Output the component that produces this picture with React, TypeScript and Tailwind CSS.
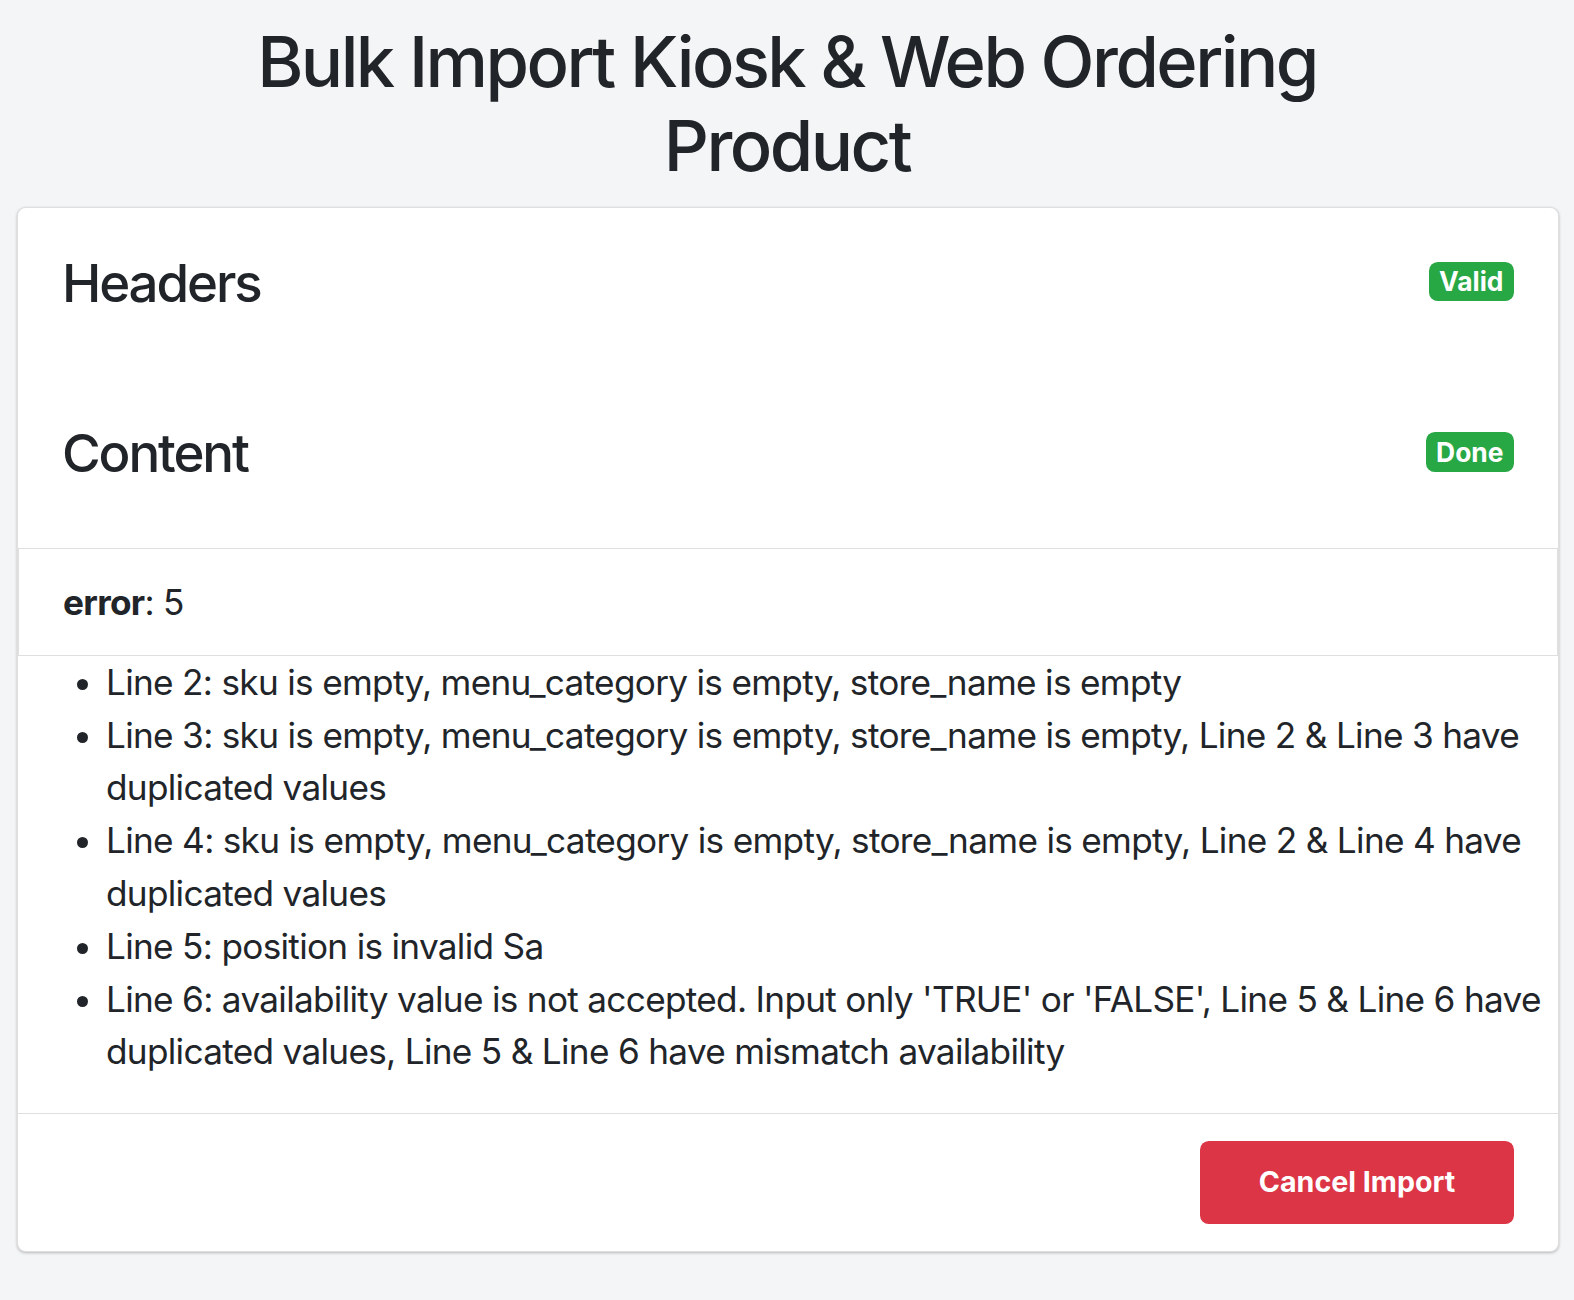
import React from 'react'

const errors = [
	"Line 2: sku is empty, menu_category is empty, store_name is empty",
	"Line 3: sku is empty, menu_category is empty, store_name is empty, Line 2 & Line 3 have duplicated values",
	"Line 4: sku is empty, menu_category is empty, store_name is empty, Line 2 & Line 4 have duplicated values",
	"Line 5: position is invalid Sa",
	"Line 6: availability value is not accepted. Input only 'TRUE' or 'FALSE', Line 5 & Line 6 have duplicated values, Line 5 & Line 6 have mismatch availability",
]

function Badge({ label }: { label: string }) {
	return (
		<span className="mt-[10px] rounded-[8.8px] bg-[#28a745] px-[10.5px] py-[6.6px] text-[26.4px] font-bold leading-none text-white">
			{label}
		</span>
	)
}

function Section({ title, badge }: { title: string; badge: string }) {
	return (
		<div className="flex items-start justify-between p-[44px]">
			<h4 className="mb-[19px] text-[52.8px] font-medium leading-[1.2] tracking-[-0.04em]">{title}</h4>
			<Badge label={badge} />
		</div>
	)
}

export default function App() {
	return (
		<div className="min-h-[1300px] bg-[#f4f5f7] pt-[20px] text-[#212529] font-['Inter','Noto_Sans',sans-serif]">
			<h2 className="mx-auto mb-[17.6px] max-w-[1200px] text-center text-[70.4px] font-medium leading-[1.2] tracking-[-0.036em]">
				Bulk Import Kiosk &amp; Web Ordering Product
			</h2>

			<div className="ml-[17px] mr-[15px] overflow-hidden rounded-[8.8px] border border-black/[0.125] bg-white shadow-[0_1px_3px_rgba(0,0,0,0.25)]">
				<Section title="Headers" badge="Valid" />
				<Section title="Content" badge="Done" />

				<div className="border border-black/[0.125] px-[44px] py-[26.4px] text-[35.2px] leading-[1.5] tracking-[-0.02em]">
					<strong className="font-bold">error</strong>: 5
				</div>
				<ul className="mb-[35.2px] list-disc pl-[88px] text-[35.2px] leading-[1.5] tracking-[-0.02em]">
					{errors.map(e => (
						<li key={e}>{e}</li>
					))}
				</ul>

				<div className="flex justify-end border-t border-black/[0.125] px-[44px] py-[26.4px]">
					<button className="h-[83.6px] w-[314px] rounded-[8.8px] bg-[#dc3545] text-[28.6px] font-bold text-white">
						Cancel Import
					</button>
				</div>
			</div>
		</div>
	)
}
